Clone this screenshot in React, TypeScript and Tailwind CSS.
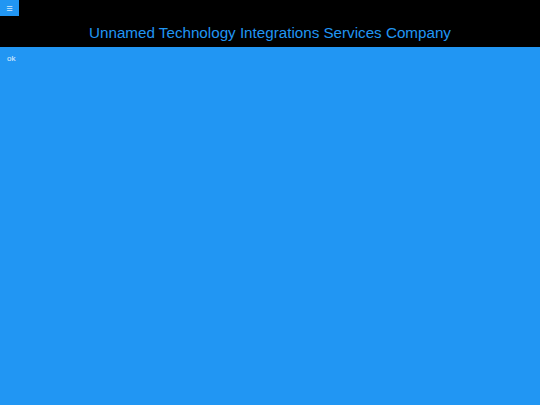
export default function App() {
  return (
    <div className="min-h-screen flex flex-col bg-[#2196f3] font-['Liberation_Sans',Arial,sans-serif]">
      <header className="relative bg-black h-[47px] flex items-end justify-center pb-[5px]">
        <button className="absolute left-0 top-0 w-[19px] h-[16px] bg-[#2196f3] text-[#cfe8fd] text-[11px] leading-[16px] flex items-center justify-center">
          ≡
        </button>
        <h1 className="text-[#2196f3] text-[15.2px] leading-[18px]">Unnamed Technology Integrations Services Company</h1>
      </header>
      <main className="flex-1 px-[7px] pt-[7px]">
        <p className="text-[#e3f2fd] text-[8px] leading-[10px]">ok</p>
      </main>
    </div>
  );
}
